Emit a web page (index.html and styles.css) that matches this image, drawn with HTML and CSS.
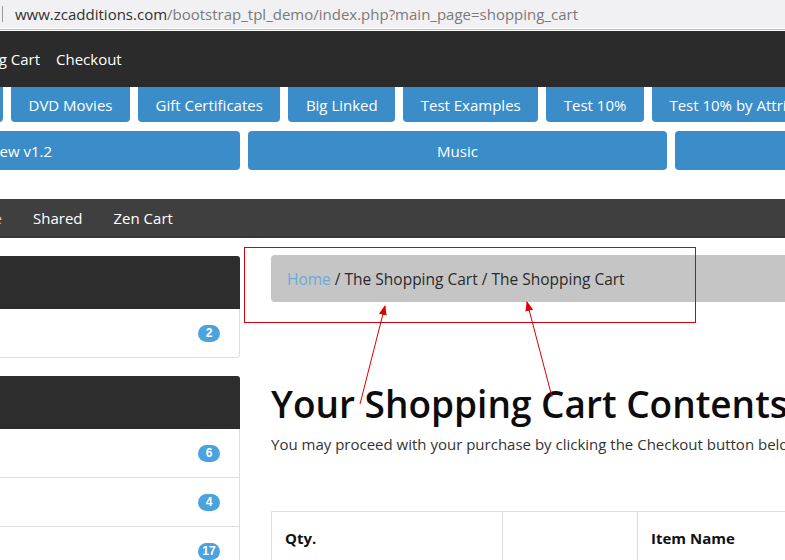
FILE: index.html
```html
<html>
 <head>
  <link rel="stylesheet" href="styles.css">
 </head>
<body>
 <div class="addressBar">
  <span class="caret"></span>
  <span class="host">www.zcadditions.com</span><span class="path">/bootstrap_tpl_demo/index.php?main_page=shopping_cart</span>
 </div>

 <div class="topNav">
  <a class="clip" href="#"><span>Shopping Cart</span></a>
  <a href="#">Checkout</a>
 </div>

 <div class="cats">
  <div class="catRow">
   <a class="catBtn firstCut" href="#">Hats</a>
   <a class="catBtn" href="#">DVD Movies</a>
   <a class="catBtn" href="#">Gift Certificates</a>
   <a class="catBtn" href="#">Big Linked</a>
   <a class="catBtn" href="#">Test Examples</a>
   <a class="catBtn" href="#">Test 10%</a>
   <a class="catBtn" href="#">Test 10% by Attributes</a>
  </div>
  <div class="catRow rowTwo">
   <a class="catBtn wide reviewCut" href="#">Review v1.2</a>
   <a class="catBtn wide" href="#">Music</a>
   <a class="catBtn wide" href="#">Sale</a>
  </div>
 </div>

 <div class="subNav">
  <a class="clip active" href="#"><span>Home</span></a>
  <a href="#">Shared</a>
  <a href="#">Zen Cart</a>
 </div>

 <div class="page">
  <div class="sidebar">
   <div class="card">
    <div class="cardHead"></div>
    <ul class="cardList">
     <li><span class="badge">2</span></li>
    </ul>
   </div>
   <div class="card">
    <div class="cardHead"></div>
    <ul class="cardList">
     <li><span class="badge">6</span></li>
     <li><span class="badge">4</span></li>
     <li><span class="badge">17</span></li>
    </ul>
   </div>
  </div>

  <div class="main">
   <div class="crumbs"><a href="#">Home</a> / The Shopping Cart / The Shopping Cart</div>
   <h1>Your Shopping Cart Contents</h1>
   <p class="intro">You may proceed with your purchase by clicking the Checkout button below.</p>
   <table class="cartTable">
    <tr>
     <th class="colQty">Qty.</th>
     <th class="colUpd"></th>
     <th class="colName">Item Name</th>
    </tr>
   </table>
  </div>
 </div>

 <!-- red annotation drawn over the screenshot -->
 <svg class="notes" width="785" height="560" viewBox="0 0 785 560">
  <defs>
   <marker id="tip" markerWidth="10" markerHeight="10" refX="9" refY="5" orient="auto" markerUnits="userSpaceOnUse">
    <path d="M0,1 L10,5 L0,9 Z" fill="#e00000"/>
   </marker>
  </defs>
  <rect x="244.5" y="247.5" width="451" height="75" fill="none" stroke="#d40010" stroke-width="1"/>
  <line x1="360" y1="404" x2="385" y2="306" stroke="#e00000" stroke-width="1" marker-end="url(#tip)"/>
  <line x1="552" y1="397" x2="527" y2="302" stroke="#e00000" stroke-width="1" marker-end="url(#tip)"/>
 </svg>
</body>
</html>
```

FILE: styles.css
```css
html, body {
        margin: 0;
        padding: 0;
        width: 785px;
        height: 560px;
        overflow: hidden;
        background: #ffffff;
        font-family: "Open Sans", "Noto Sans", sans-serif;
        color: #333333;
       }

a {
   text-decoration: none;
   color: inherit;
  }

.addressBar {
        height: 28px;
        background: #f1f1f3;
        border-bottom: 1px solid #ffffff;
        box-shadow: 0 1px 0 #b9b9b9;
        display: flex;
        align-items: center;
        font-size: 15px;
        white-space: nowrap;
        margin-bottom: 2px;
       }

.addressBar .caret {
        width: 1px;
        height: 16px;
        background: #9a9a9a;
        margin: 0 12px 0 2px;
       }

.addressBar .host { color: #303030; }
.addressBar .path { color: #7a7a7a; }

.topNav {
        height: 56px;
        background: #2b2b2b;
        display: flex;
        align-items: center;
        gap: 16px;
        font-size: 15px;
        color: #ffffff;
        white-space: nowrap;
       }

.clip {
       display: flex;
       justify-content: flex-end;
       overflow: hidden;
      }

.topNav .clip { width: 40px; }

.cats {
       display: flex;
       flex-direction: column;
       gap: 9px;
      }

.catRow {
         display: flex;
         gap: 8px;
         white-space: nowrap;
        }

.catBtn {
         flex: none;
         height: 35px;
         padding: 0 17.5px;
         display: flex;
         align-items: center;
         justify-content: center;
         background: #3b8dc9;
         color: #ffffff;
         font-size: 15px;
         border-radius: 0 0 4px 4px;
        }

.firstCut {
           box-sizing: border-box;
           width: 60px;
           margin-left: -57px;
           justify-content: flex-start;
           overflow: hidden;
          }

.rowTwo .catBtn {
                 height: 39px;
                 border-radius: 4px;
                }

.catBtn.wide {
              box-sizing: border-box;
              width: 419px;
             }

.reviewCut {
            margin-left: -179px;
            justify-content: flex-end;
            padding-right: 188px;
           }

.subNav {
         margin-top: 29px;
         height: 37px;
         background: #3f3f3f;
         border-bottom: 2px solid #353535;
         display: flex;
         align-items: center;
         gap: 31px;
         font-size: 15px;
         color: #ffffff;
         white-space: nowrap;
        }

.subNav .clip { width: 2px; }
.subNav .active { color: #e9c27c; }

.page {
       display: grid;
       grid-template-columns: 240px 700px;
       column-gap: 31px;
       margin-top: 17px;
      }

.card {
       border: 1px solid #dddddd;
       border-left: 0;
       border-radius: 0 4px 4px 0;
       margin-bottom: 18px;
       margin-top: 1px;
      }

.cardHead {
           height: 53px;
           background: #2d2d2d;
           border-radius: 0 3px 0 0;
           margin-top: -1px;
           margin-right: -1px;
          }

.cardList {
           list-style-type: none;
           margin: 0;
           padding: 0;
          }

.cardList li {
              height: 48px;
              display: flex;
              align-items: center;
              justify-content: flex-end;
              padding-right: 19px;
              border-top: 1px solid #dddddd;
             }

.cardList li:first-child { border-top: 0; }

.badge {
        min-width: 22px;
        height: 17px;
        padding: 0 3px;
        box-sizing: border-box;
        border-radius: 9px;
        background: #4ba3de;
        color: #ffffff;
        font-size: 12px;
        font-weight: bold;
        font-family: "Liberation Sans", sans-serif;
        display: flex;
        align-items: center;
        justify-content: center;
       }

.crumbs {
         height: 47px;
         box-sizing: border-box;
         padding: 0 16px;
         display: flex;
         align-items: center;
         background: #c5c5c5;
         border-radius: 4px;
         font-size: 15.5px;
         color: #2a2a2a;
         white-space: pre;
        }

.crumbs a { color: #6fa8da; }

h1 {
    margin: 80px 0 0 0;
    font-size: 37px;
    font-weight: 600;
    line-height: 44px;
    color: #0c0c0c;
    white-space: nowrap;
   }

.intro {
        margin: 7px 0 0 0;
        font-size: 15px;
        line-height: 22px;
        color: #333333;
        white-space: nowrap;
       }

.cartTable {
            margin-top: 56px;
            border-collapse: collapse;
            width: 700px;
           }

.cartTable th {
               border: 1px solid #dddddd;
               height: 50px;
               padding: 2px 13px 0 13px;
               text-align: left;
               font-size: 15px;
               font-weight: bold;
               color: #111111;
              }

.colQty { width: 204px; }
.colUpd { width: 108px; }

.notes {
        position: absolute;
        left: 0;
        top: 0;
        pointer-events: none;
       }
```
